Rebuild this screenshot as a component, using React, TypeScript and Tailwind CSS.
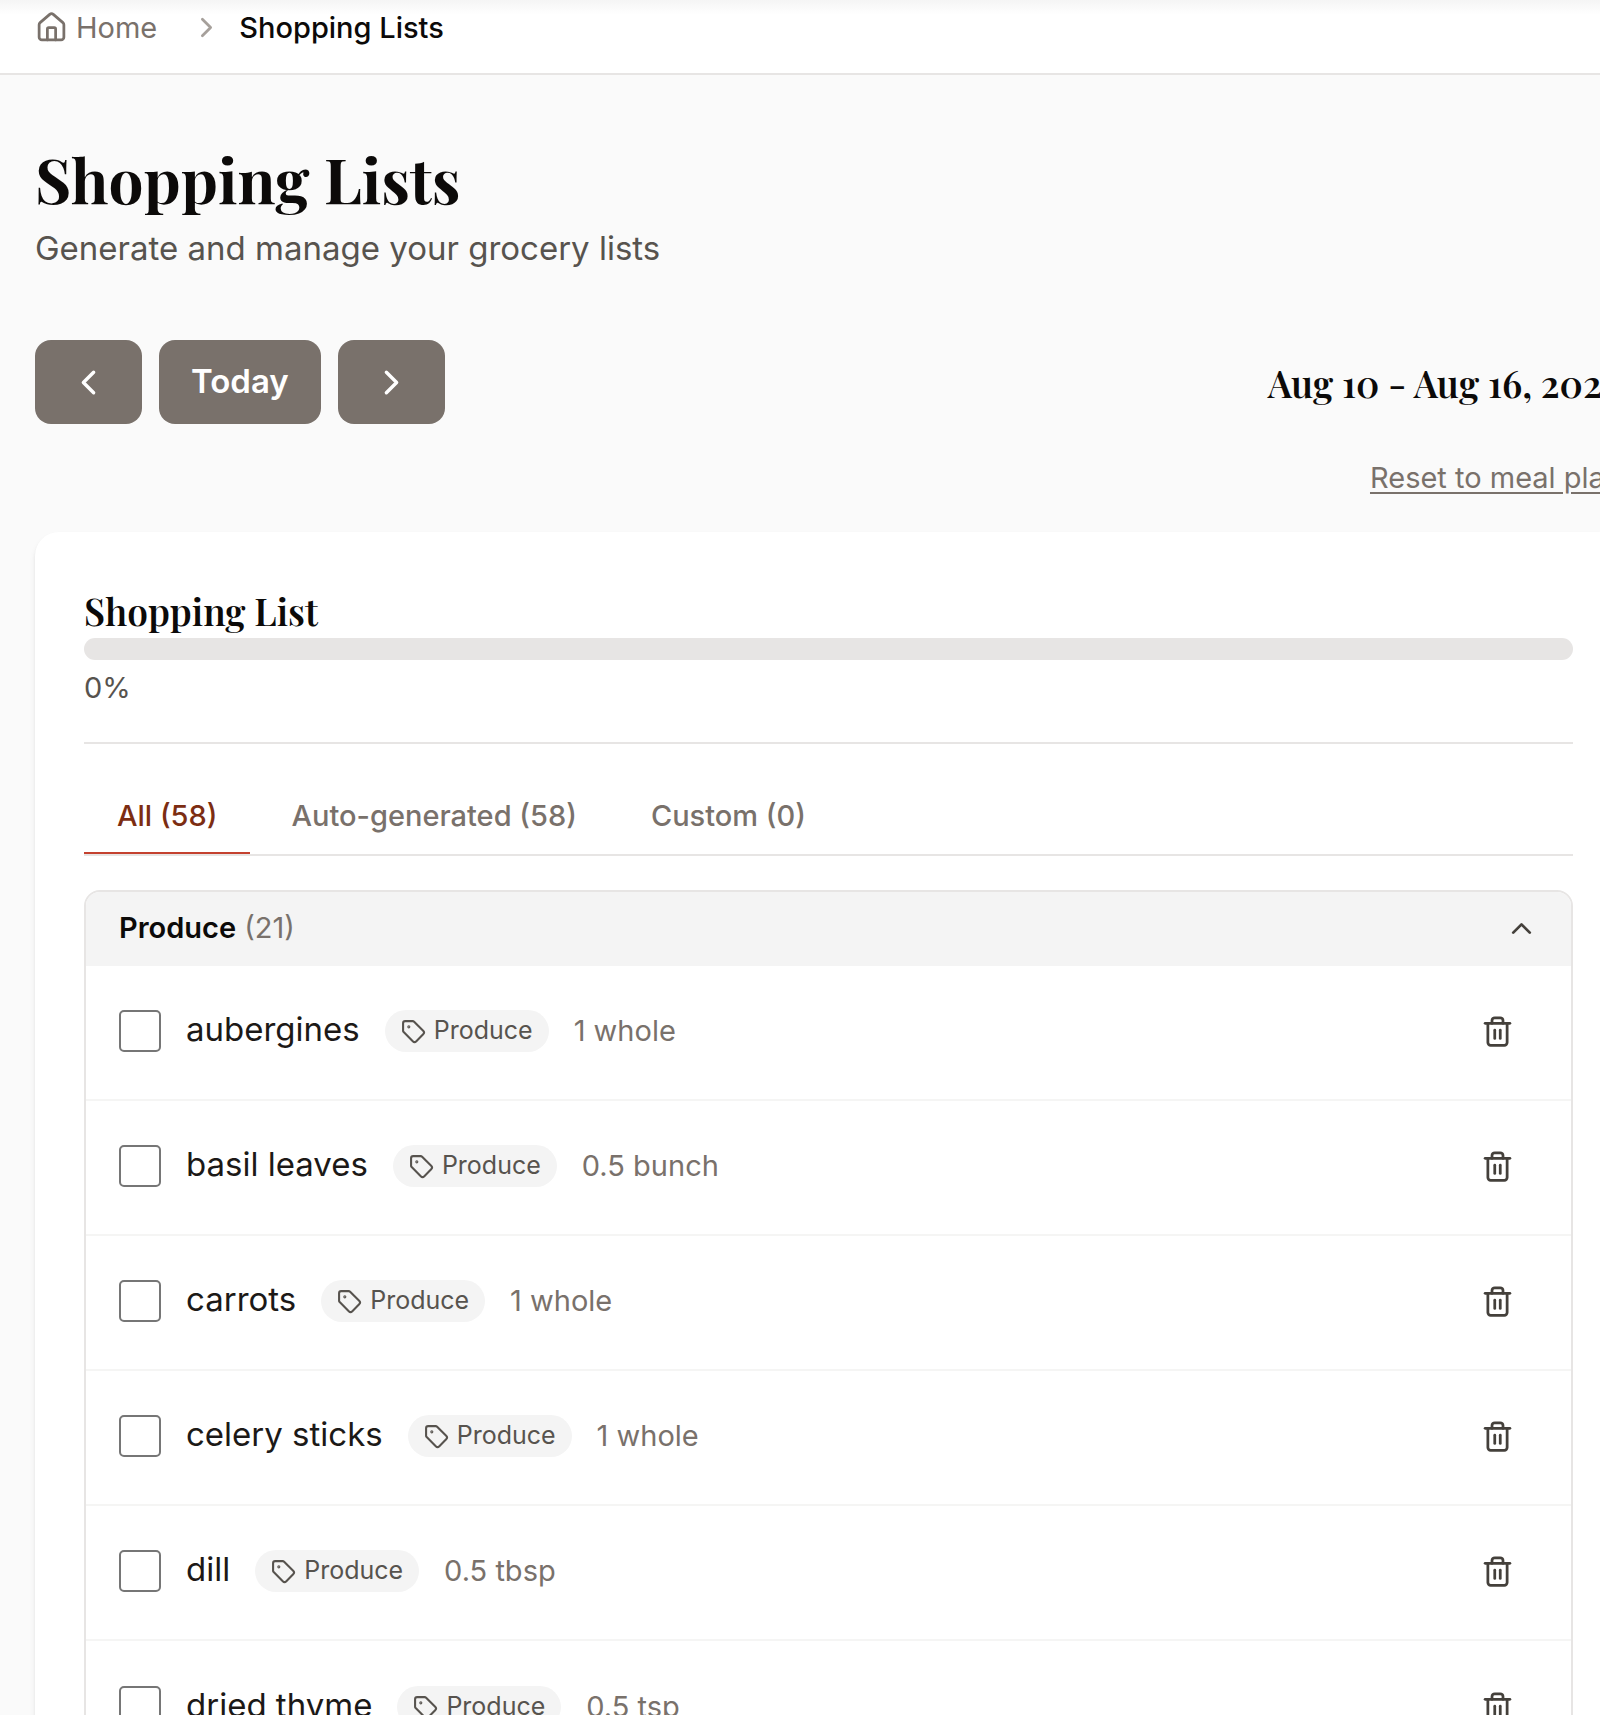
import { useState } from "react";
import { ChevronLeft, ChevronRight, ChevronUp, House, Tag, Trash2 } from "lucide-react";

const tabs = ["All (58)", "Auto-generated (58)", "Custom (0)"];

const items = [
    { name: "aubergines", category: "Produce", quantity: "1 whole" },
    { name: "basil leaves", category: "Produce", quantity: "0.5 bunch" },
    { name: "carrots", category: "Produce", quantity: "1 whole" },
    { name: "celery sticks", category: "Produce", quantity: "1 whole" },
    { name: "dill", category: "Produce", quantity: "0.5 tbsp" },
    { name: "dried thyme", category: "Produce", quantity: "0.5 tsp" },
];

const serif = "font-['Playfair_Display','Liberation_Serif',serif]";

type Item = { name: string; category: string; quantity: string };

function ShoppingItem({ name, category, quantity }: Item){
    const id = name.replace(" ", "-");
    return(
    <li className="flex h-[135px] items-center border-b-2 border-[#f5f5f4] pr-[57px] pb-[3px] pl-[33px] last:border-b-0">
        <input type="checkbox" id={id} className="h-[42px] w-[42px] shrink-0 appearance-none rounded-[5px] border-2 border-[#767676] bg-white checked:bg-[#9a3412]" />
        <label htmlFor={id} className="pb-1 pl-[25px] text-[33px] leading-10 text-[#1c1917]">{name}</label>
        <span className="ml-[25px] flex h-[42px] items-center gap-2 rounded-full bg-[#f4f4f4] px-4 text-[25px] text-[#57534e]">
            <Tag size={25} />
            {category}
        </span>
        <span className="ml-[25px] text-[29px] text-[#79716b]">{quantity}</span>
        <button type="button" aria-label={"Delete " + name} className="ml-auto text-[#44403b]">
            <Trash2 size={33} />
        </button>
    </li>
    )
}

export default function App(){
    const [tab, setTab] = useState(0);
    const [open, setOpen] = useState(true);

    return(
    <div className="h-screen overflow-hidden bg-[#fafafa] font-['Inter',sans-serif] text-[#0c0a09]">
        <header className="border-b-2 border-[#e7e5e4] bg-linear-to-b from-[#f5f5f5] to-white to-20% px-[35px] pt-[3px] pb-[21px]">
            <nav aria-label="Breadcrumb" className="flex h-[49px] items-center text-[29px]">
                <a href="#" className="flex items-center gap-2 text-[#79716b]">
                    <House size={33} />
                    Home
                </a>
                <ChevronRight size={33} className="mr-4 ml-[33px] text-[#a6a09b]" />
                <span className="font-medium">Shopping Lists</span>
            </nav>
        </header>

        {/* the content is a bit wider than the window and runs off its right edge */}
        <main className="w-[calc(100%+57px)] px-[35px] pt-[66px]">
            <h1 className={serif + " text-[62px] leading-[76px] font-bold"}>Shopping Lists</h1>
            <p className="text-[33px] leading-[62px] text-[#57534e]">Generate and manage your grocery lists</p>

            <div className="mt-[61px] flex items-center justify-between">
                <div className="flex gap-[17px] text-white">
                    <button type="button" aria-label="Previous week" className="flex h-[84px] w-[107px] items-center justify-center rounded-2xl bg-[#79716b]">
                        <ChevronLeft size={41} />
                    </button>
                    <button type="button" className="h-[84px] rounded-2xl bg-[#79716b] px-8 text-[33px] font-semibold">Today</button>
                    <button type="button" aria-label="Next week" className="flex h-[84px] w-[107px] items-center justify-center rounded-2xl bg-[#79716b]">
                        <ChevronRight size={41} />
                    </button>
                </div>
                <h2 className={serif + " pt-0.5 text-[37px] leading-10 font-semibold"}>Aug 10 - Aug 16, 2026</h2>
            </div>

            <div className="flex justify-end pt-8 pb-8">
                <a href="#" className="text-[29px] leading-11 text-[#79716b] underline underline-offset-4">Reset to meal plan</a>
            </div>

            <section className="rounded-3xl bg-white px-[49px] pt-[58px] shadow-md">
                <h2 className={serif + " pb-1.5 text-[37px] leading-[42px] font-semibold"}>Shopping List</h2>
                <div role="progressbar" aria-label="Shopping progress" aria-valuenow={0} className="h-[22px] rounded-full bg-[#e7e5e4]" />
                <p className="border-b-2 border-[#e7e5e4] pt-1 pb-[30px] text-[29px] leading-12 text-[#57534e]">0%</p>

                <div role="tablist" className="mt-[34px] flex gap-2 border-b-2 border-[#e7e5e4] text-[29px] font-medium">
                    {tabs.map((label, i) => (
                        <button
                            key={label}
                            type="button"
                            role="tab"
                            aria-selected={tab === i}
                            onClick={() => setTab(i)}
                            className={tab === i
                                ? "h-[76px] border-b-2 border-[#c4412f] px-[33px] pt-0.5 text-[#7c2d12]"
                                : "h-[76px] border-b-2 border-transparent px-[33px] pt-0.5 text-[#79716b]"}
                        >
                            {label}
                        </button>
                    ))}
                </div>

                <div className="mt-[34px] overflow-hidden rounded-t-2xl border-2 border-[#e7e5e4]">
                    <button type="button" aria-expanded={open} onClick={() => setOpen(!open)} className="flex h-[74px] w-full items-center justify-between bg-[#f4f4f4] px-[33px] pb-0.5 text-[29px]">
                        <span>
                            <span className="font-semibold">Produce</span> <span className="text-[#79716b]">(21)</span>
                        </span>
                        <ChevronUp size={33} className="text-[#44403b]" />
                    </button>
                    {open && (
                        <ul>
                            {items.map((item) => <ShoppingItem key={item.name} {...item} />)}
                        </ul>
                    )}
                </div>
            </section>
        </main>
    </div>
    )
}
